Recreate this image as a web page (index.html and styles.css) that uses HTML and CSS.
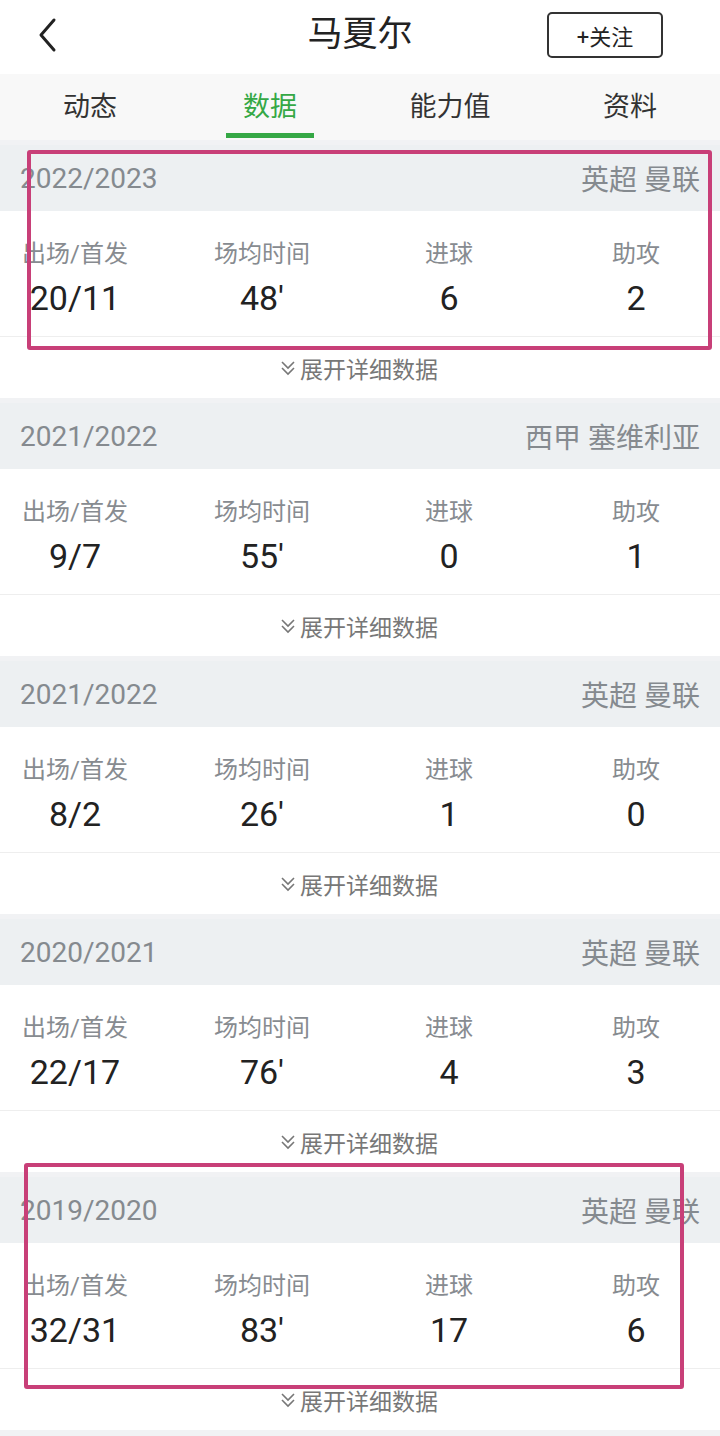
FILE: index.html
```html
<!DOCTYPE html>
<html lang="zh-CN">
<head>
  <meta charset="UTF-8" />
  <title>马夏尔 - 数据</title>
  <link rel="stylesheet" href="styles.css">
</head>
<body>
  <div class="page">
    <div class="topbar">
      <svg class="back" width="24" height="36" viewBox="0 0 24 36">
        <path d="M18 3 L5 18 L18 33" fill="none" stroke="#222" stroke-width="3" stroke-linecap="round" stroke-linejoin="round"/>
      </svg>
      <div class="title">马夏尔</div>
      <button class="follow">+关注</button>
    </div>

    <div class="tabs">
      <div class="tab">动态</div>
      <div class="tab active">数据</div>
      <div class="tab">能力值</div>
      <div class="tab">资料</div>
    </div>

    <div class="season">
      <div class="season-head"><span class="year">2022/2023</span><span class="club">英超 曼联</span></div>
      <div class="stats">
        <div class="stat"><div class="label">出场/首发</div><div class="value">20/11</div></div>
        <div class="stat"><div class="label">场均时间</div><div class="value">48'</div></div>
        <div class="stat"><div class="label">进球</div><div class="value">6</div></div>
        <div class="stat"><div class="label">助攻</div><div class="value">2</div></div>
      </div>
      <div class="expand"><svg width="16" height="16" viewBox="0 0 16 16"><path d="M2 2 L8 8 L14 2 M2 8 L8 14 L14 8" fill="none" stroke="#777" stroke-width="1.6"/></svg>展开详细数据</div>
    </div>

    <div class="season">
      <div class="season-head"><span class="year">2021/2022</span><span class="club">西甲 塞维利亚</span></div>
      <div class="stats">
        <div class="stat"><div class="label">出场/首发</div><div class="value">9/7</div></div>
        <div class="stat"><div class="label">场均时间</div><div class="value">55'</div></div>
        <div class="stat"><div class="label">进球</div><div class="value">0</div></div>
        <div class="stat"><div class="label">助攻</div><div class="value">1</div></div>
      </div>
      <div class="expand"><svg width="16" height="16" viewBox="0 0 16 16"><path d="M2 2 L8 8 L14 2 M2 8 L8 14 L14 8" fill="none" stroke="#777" stroke-width="1.6"/></svg>展开详细数据</div>
    </div>

    <div class="season">
      <div class="season-head"><span class="year">2021/2022</span><span class="club">英超 曼联</span></div>
      <div class="stats">
        <div class="stat"><div class="label">出场/首发</div><div class="value">8/2</div></div>
        <div class="stat"><div class="label">场均时间</div><div class="value">26'</div></div>
        <div class="stat"><div class="label">进球</div><div class="value">1</div></div>
        <div class="stat"><div class="label">助攻</div><div class="value">0</div></div>
      </div>
      <div class="expand"><svg width="16" height="16" viewBox="0 0 16 16"><path d="M2 2 L8 8 L14 2 M2 8 L8 14 L14 8" fill="none" stroke="#777" stroke-width="1.6"/></svg>展开详细数据</div>
    </div>

    <div class="season">
      <div class="season-head"><span class="year">2020/2021</span><span class="club">英超 曼联</span></div>
      <div class="stats">
        <div class="stat"><div class="label">出场/首发</div><div class="value">22/17</div></div>
        <div class="stat"><div class="label">场均时间</div><div class="value">76'</div></div>
        <div class="stat"><div class="label">进球</div><div class="value">4</div></div>
        <div class="stat"><div class="label">助攻</div><div class="value">3</div></div>
      </div>
      <div class="expand"><svg width="16" height="16" viewBox="0 0 16 16"><path d="M2 2 L8 8 L14 2 M2 8 L8 14 L14 8" fill="none" stroke="#777" stroke-width="1.6"/></svg>展开详细数据</div>
    </div>

    <div class="season">
      <div class="season-head"><span class="year">2019/2020</span><span class="club">英超 曼联</span></div>
      <div class="stats">
        <div class="stat"><div class="label">出场/首发</div><div class="value">32/31</div></div>
        <div class="stat"><div class="label">场均时间</div><div class="value">83'</div></div>
        <div class="stat"><div class="label">进球</div><div class="value">17</div></div>
        <div class="stat"><div class="label">助攻</div><div class="value">6</div></div>
      </div>
      <div class="expand"><svg width="16" height="16" viewBox="0 0 16 16"><path d="M2 2 L8 8 L14 2 M2 8 L8 14 L14 8" fill="none" stroke="#777" stroke-width="1.6"/></svg>展开详细数据</div>
    </div>

    <!-- annotation frames drawn over the screenshot -->
    <div class="mark mark-top"></div>
    <div class="mark mark-bottom"></div>
  </div>
</body>
</html>
```

FILE: styles.css
```css
body {
  margin: 0;
  background: #f1f2f4;
  font-family: Roboto, "Noto Sans CJK SC", sans-serif;
}
.page {
  position: relative;
  width: 720px;
  overflow: hidden;
}
.topbar {
  height: 74px;
  background: #fff;
  display: flex;
  align-items: center;
  justify-content: space-between;
  padding: 0 57px 0 36px;
  position: relative;
}
.back {
  display: block;
  margin-top: -4px;
}
.title {
  position: absolute;
  left: 0;
  right: 0;
  text-align: center;
  font-size: 35px;
  font-weight: 400;
  color: #222;
  top: 12px;
  line-height: 46px;
  pointer-events: none;
}
.follow {
  width: 116px;
  height: 46px;
  margin-top: -4px;
  border: 2px solid #333;
  border-radius: 5px;
  background: #fff;
  color: #222;
  font-family: Roboto, "Noto Sans CJK SC", sans-serif;
  font-size: 22px;
  padding: 0;
}
.tabs {
  height: 66px;
  background: #f8f8f8;
  display: grid;
  grid-template-columns: repeat(4, 1fr);
}
.tab {
  text-align: center;
  font-size: 27px;
  color: #333;
  line-height: 66px;
  position: relative;
}
.tab.active {
  color: #35a845;
}
.tab.active::after {
  content: "";
  position: absolute;
  left: 46px;
  right: 46px;
  bottom: 2px;
  height: 5px;
  background: #35a845;
}
.season {
  margin-top: 5px;
  background: #fff;
}
.season-head {
  height: 66px;
  background: #edf0f2;
  display: flex;
  align-items: center;
  justify-content: space-between;
  padding: 0 20px;
  font-size: 28px;
  color: #858a8f;
}
.stats {
  height: 126px;
  box-sizing: border-box;
  border-bottom: 1px solid #eeeeee;
  display: grid;
  grid-template-columns: repeat(4, 150px);
  column-gap: 37px;
  padding-top: 30px;
}
.stat {
  text-align: center;
}
.label {
  font-size: 24px;
  line-height: 26px;
  color: #878b90;
}
.value {
  font-size: 34px;
  line-height: 38px;
  margin-top: 12px;
  color: #222;
}
.expand {
  height: 61px;
  display: flex;
  align-items: center;
  justify-content: center;
  gap: 4px;
  font-size: 23px;
  color: #777;
  padding-right: 2px;
}
.mark {
  position: absolute;
  border: 4px solid #c83f78;
  border-radius: 3px;
  box-sizing: border-box;
}
.mark-top {
  left: 27px;
  top: 150px;
  width: 685px;
  height: 200px;
}
.mark-bottom {
  left: 24px;
  top: 1163px;
  width: 660px;
  height: 226px;
}
```
